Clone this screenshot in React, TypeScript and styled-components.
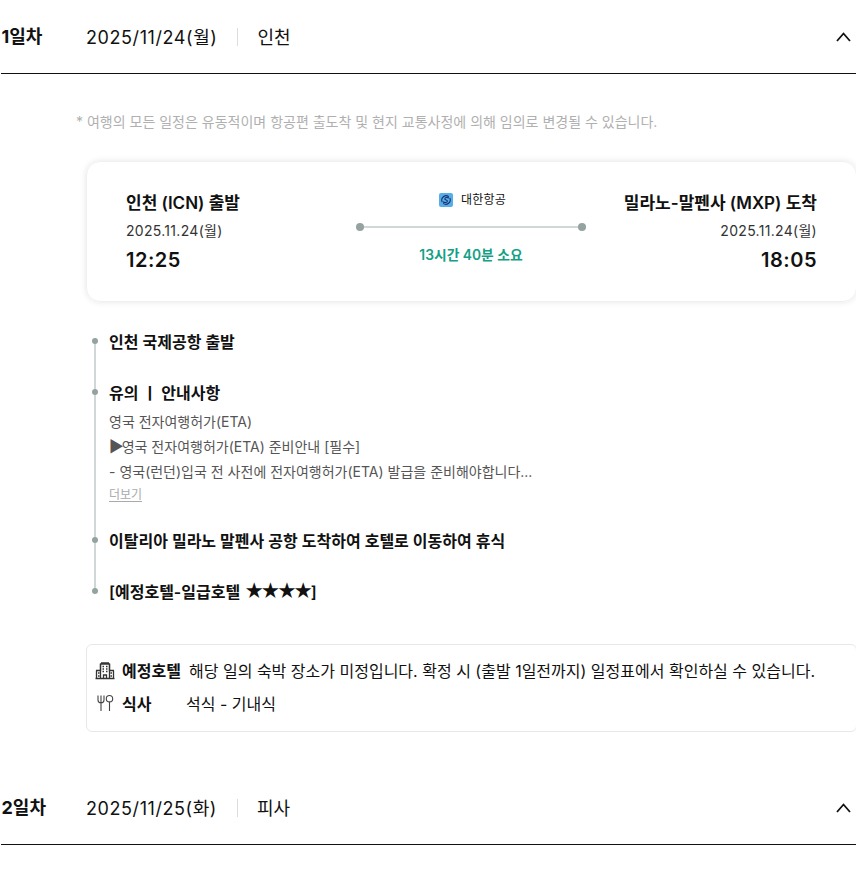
import { createGlobalStyle, styled } from "styled-components";

const GlobalStyle = createGlobalStyle`
  html, body {
    margin: 0;
    padding: 0;
    background: #fff;
    overflow: hidden;
  }
  body {
    font-family: Inter, "Noto Sans CJK KR", sans-serif;
    color: #111;
  }
`;

const Page = styled.div`
  width: 856px;
  height: 869px;
  padding-left: 1px;
  box-sizing: border-box;
  overflow: hidden;
`;

const DayHeader = styled.div`
  display: flex;
  align-items: center;
  height: 73px;
  border-bottom: 1px solid #111;
  padding-right: 5px;
`;

const DayLabel = styled.div`
  width: 84.5px;
  padding-left: 0.5px;
  font-size: 18px;
  font-weight: 700;
  margin-top: -3px;
`;

const DayDate = styled.div`
  font-size: 18px;
  font-weight: 400;
  letter-spacing: 0.58px;
  margin-top: -2px;
`;

const Divider = styled.span`
  width: 1px;
  height: 18px;
  background: #ddd;
  margin: 0 19px 0 20px;
`;

const DayCity = styled.div`
  font-size: 18px;
  flex: 1;
  margin-top: -2px;
`;

const Chevron = styled.svg`
  width: 15px;
  height: 10px;
`;

const DayBody = styled.div`
  padding: 39px 0 0 75px;
  height: 697px;
  box-sizing: border-box;
`;

const Notice = styled.p`
  margin: 0 0 30px;
  font-size: 14px;
  line-height: 18px;
  color: #b0b0b0;
`;

const FlightCard = styled.div`
  width: 771px;
  height: 141px;
  margin-left: 10px;
  box-sizing: border-box;
  padding: 0 39px;
  display: flex;
  align-items: flex-start;
  justify-content: space-between;
  border-radius: 14px;
  border: 1px solid #f0f0f0;
  box-shadow: 0 0 6px rgba(0, 0, 0, 0.1);
`;

const Endpoint = styled.div<{ $right?: boolean }>`
  width: 230px;
  padding-top: 29px;
  text-align: ${(p) => (p.$right ? "right" : "left")};
`;

const City = styled.div`
  font-size: 17px;
  font-weight: 600;
  line-height: 24px;
`;

const FlightDate = styled.div`
  font-size: 14px;
  letter-spacing: 0.3px;
  line-height: 18px;
  margin-top: 7px;
  color: #333;
`;

const FlightTime = styled.div`
  font-size: 20px;
  font-weight: 600;
  letter-spacing: 0.5px;
  line-height: 24px;
  margin-top: 8px;
`;

const Route = styled.div`
  width: 230px;
  margin-right: 1px;
  padding-top: 29px;
  display: flex;
  flex-direction: column;
  align-items: center;
`;

const Airline = styled.div`
  display: flex;
  align-items: center;
  gap: 8px;
  font-size: 12px;
  letter-spacing: 0.2px;
  line-height: 18px;
  margin-left: 3px;
`;

const RouteLine = styled.div`
  position: relative;
  width: 230px;
  height: 2px;
  margin-top: 17px;
  background: #cfd8d6;
`;

const RouteDot = styled.span<{ $end?: boolean }>`
  position: absolute;
  top: -3px;
  ${(p) => (p.$end ? "right: 0;" : "left: 0;")}
  width: 8px;
  height: 8px;
  border-radius: 50%;
  background: #94a3a0;
`;

const Duration = styled.div`
  margin-top: 17px;
  font-size: 13.8px;
  font-weight: 600;
  line-height: 20px;
  color: #14a085;
`;

const Timeline = styled.ul`
  position: relative;
  list-style: none;
  margin: 28px 0 0 33px;
  padding: 0;
`;

const Rail = styled.span`
  position: absolute;
  left: -15px;
  top: 11px;
  height: 251px;
  width: 2px;
  background: #cfd8d6;
`;

const Stop = styled.li`
  position: relative;
  margin-bottom: 27px;
  &::before {
    content: "";
    position: absolute;
    left: -17px;
    top: 8px;
    width: 6px;
    height: 6px;
    border-radius: 50%;
    background: #94a3a0;
  }
`;

const StopTitle = styled.div`
  font-size: 16px;
  font-weight: 600;
  line-height: 24px;
`;

const Stars = styled.span`
  font-size: 19px;
  letter-spacing: -3.5px;
  line-height: 0;
  margin-right: 1px;
`;

const StopNote = styled.div`
  margin-top: 4px;
  font-size: 14px;
  line-height: 25px;
  color: #555;
`;

const Arrow = styled.span`
  font-size: 16px;
  letter-spacing: -3px;
  line-height: 0;
  margin-right: 1px;
`;

const MoreLink = styled.a`
  display: block;
  width: fit-content;
  margin: 5px 0 1px;
  font-size: 12px;
  line-height: 12px;
  color: #aaa;
  border-bottom: 1px solid #aaa;
`;

const InfoBox = styled.div`
  width: 771px;
  height: 88px;
  margin: 40px 0 0 10px;
  box-sizing: border-box;
  padding: 8px 8px;
  border: 1px solid #e8e8e8;
  border-radius: 6px;
`;

const InfoRow = styled.div`
  display: flex;
  align-items: center;
  height: 33px;
  font-size: 16px;
`;

const InfoIcon = styled.svg`
  width: 20px;
  height: 20px;
  flex: none;
  margin-right: 7px;
`;

const InfoLabel = styled.span<{ $wide?: boolean }>`
  font-weight: 700;
  font-size: 16px;
  width: ${(p) => (p.$wide ? "67px" : "64px")};
  flex: none;
`;

const Logo = styled.svg`
  width: 14px;
  height: 14px;
`;

const AirlineLogo = () => (
  <Logo viewBox="0 0 14 14" fill="none" stroke="#1b3070" strokeWidth="1.1">
    <rect width="14" height="14" rx="2" fill="#55aee8" stroke="none" />
    <path d="M9.800 3.600A4.400 4.400 0 0 0 3.200 9" />
    <path d="M4.200 10.400A4.400 4.400 0 0 0 10.800 5" />
    <path d="M10 5.200C8.500 3.900 6 4.300 5.800 5.800 5.600 7.300 8.600 6.700 8.400 8.200 8.200 9.700 5.500 10 4 8.800" />
  </Logo>
);

const Header = ({ day, date, city }: { day: string; date: string; city: string }) => (
  <DayHeader>
    <DayLabel>{day}</DayLabel>
    <DayDate>{date}</DayDate>
    <Divider />
    <DayCity>{city}</DayCity>
    <Chevron viewBox="0 0 15 10">
      <path d="M1 9l6.500-7.500L14 9" fill="none" stroke="#111" strokeWidth="1.8" />
    </Chevron>
  </DayHeader>
);

export default function App() {
  return (
    <Page>
      <GlobalStyle />
      <Header day="1일차" date="2025/11/24(월)" city="인천" />
      <DayBody>
        <Notice>* 여행의 모든 일정은 유동적이며 항공편 출도착 및 현지 교통사정에 의해 임의로 변경될 수 있습니다.</Notice>
        <FlightCard>
          <Endpoint>
            <City>인천 (ICN) 출발</City>
            <FlightDate>2025.11.24(월)</FlightDate>
            <FlightTime>12:25</FlightTime>
          </Endpoint>
          <Route>
            <Airline>
              <AirlineLogo />
              대한항공
            </Airline>
            <RouteLine>
              <RouteDot />
              <RouteDot $end />
            </RouteLine>
            <Duration>13시간 40분 소요</Duration>
          </Route>
          <Endpoint $right>
            <City>밀라노-말펜사 (MXP) 도착</City>
            <FlightDate>2025.11.24(월)</FlightDate>
            <FlightTime>18:05</FlightTime>
          </Endpoint>
        </FlightCard>
        <Timeline>
          <Rail />
          <Stop>
            <StopTitle>인천 국제공항 출발</StopTitle>
          </Stop>
          <Stop>
            <StopTitle>유의 ㅣ 안내사항</StopTitle>
            <StopNote>
              영국 전자여행허가(ETA)
              <br />
              <Arrow>▶</Arrow>영국 전자여행허가(ETA) 준비안내 [필수]
              <br />- 영국(런던)입국 전 사전에 전자여행허가(ETA) 발급을 준비해야합니다...
            </StopNote>
            <MoreLink>더보기</MoreLink>
          </Stop>
          <Stop>
            <StopTitle>이탈리아 밀라노 말펜사 공항 도착하여 호텔로 이동하여 휴식</StopTitle>
          </Stop>
          <Stop>
            <StopTitle>
              [예정호텔-일급호텔 <Stars>★★★★</Stars>]
            </StopTitle>
          </Stop>
        </Timeline>
        <InfoBox>
          <InfoRow>
            <InfoIcon viewBox="0 0 20 20" fill="none" stroke="#333" strokeWidth="1.3">
              <path d="M1 10.500h4.500V4h9v6.500H19M6 2.800h8M1.500 10.500v8M18.500 10.500v8M.5 18.500h19" />
              <path d="M8.500 18.500v-3.500h3v3.500M5.500 4v14.500M14.500 4v14.500M7.500 6.500h1.500M11 6.500h1.500M7.500 9h1.500M11 9h1.500M7.500 11.500h1.500M11 11.500h1.500M3 13h1.500M15.500 13H17M3 16h1.500M15.500 16H17" />
            </InfoIcon>
            <InfoLabel $wide>예정호텔</InfoLabel>
            해당 일의 숙박 장소가 미정입니다. 확정 시 (출발 1일전까지) 일정표에서 확인하실 수 있습니다.
          </InfoRow>
          <InfoRow>
            <InfoIcon viewBox="0 0 20 20" fill="none" stroke="#444" strokeWidth="1.1">
              <path d="M3 2.500v4.500c0 1.800 1.300 2.800 3 2.800s3-1 3-2.800V2.500M6 2.500v15.500" />
              <path d="M14.500 2.500c-2 0-3.200 1.300-3.200 3.200s1.200 3.200 3.200 3.200 3.200-1.300 3.200-3.200-1.200-3.200-3.200-3.200zM14.500 8.900V18" />
            </InfoIcon>
            <InfoLabel>식사</InfoLabel>
            석식 - 기내식
          </InfoRow>
        </InfoBox>
      </DayBody>
      <Header day="2일차" date="2025/11/25(화)" city="피사" />
    </Page>
  );
}
